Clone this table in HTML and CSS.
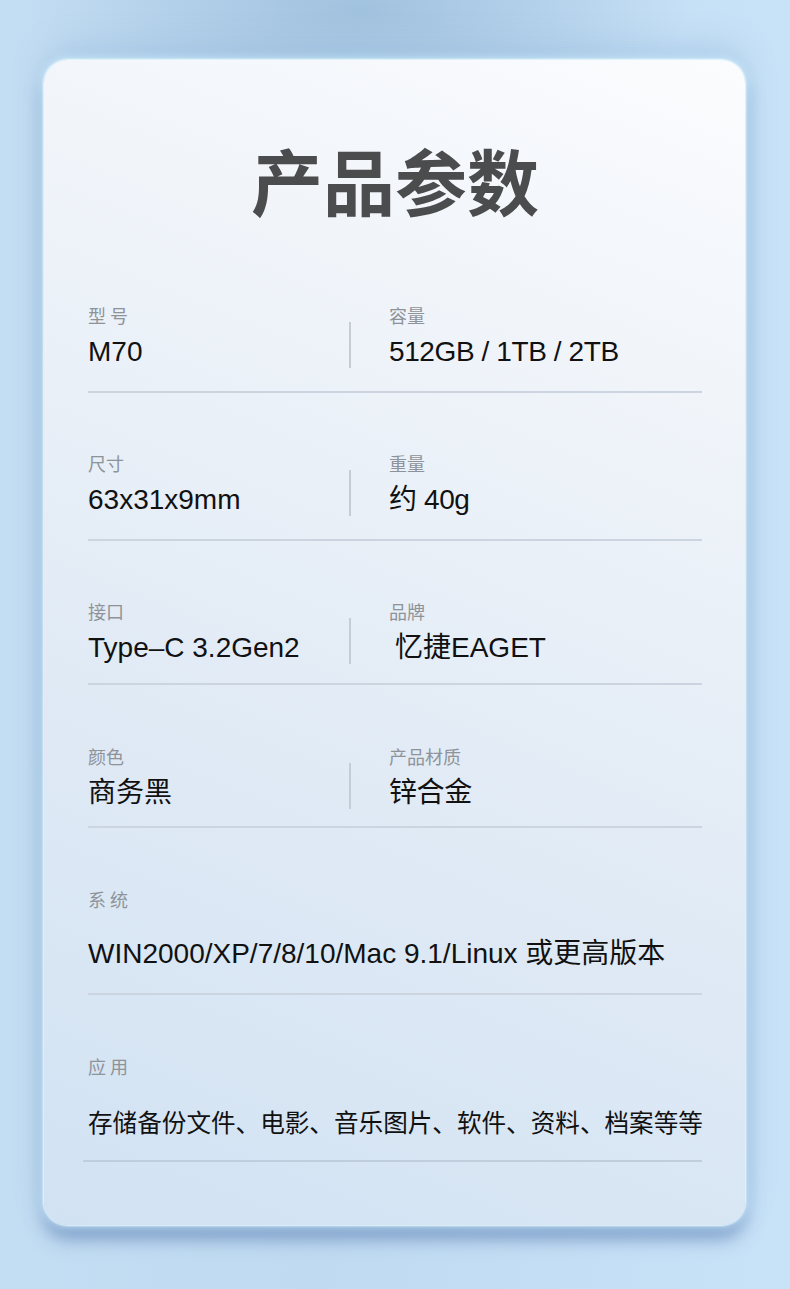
FILE: index.html
```html
<!DOCTYPE html>
<html lang="zh-CN">
<head>
<meta charset="utf-8">
<title>产品参数</title>
<link rel="stylesheet" href="styles.css">
</head>
<body>
<div class="page">
  <section class="card">
    <h1 class="title">产品参数</h1>

    <div class="row pair r1">
      <div class="cell">
        <div class="label">型 号</div>
        <div class="value">M70</div>
      </div>
      <div class="vline"></div>
      <div class="cell right">
        <div class="label">容量</div>
        <div class="value">512GB / 1TB / 2TB</div>
      </div>
    </div>

    <div class="row pair r2">
      <div class="cell">
        <div class="label">尺寸</div>
        <div class="value">63x31x9mm</div>
      </div>
      <div class="vline"></div>
      <div class="cell right">
        <div class="label">重量</div>
        <div class="value">约 40g</div>
      </div>
    </div>

    <div class="row pair r3">
      <div class="cell">
        <div class="label">接口</div>
        <div class="value">Type–C 3.2Gen2</div>
      </div>
      <div class="vline"></div>
      <div class="cell right">
        <div class="label">品牌</div>
        <div class="value indent">忆捷EAGET</div>
      </div>
    </div>

    <div class="row pair r4">
      <div class="cell">
        <div class="label">颜色</div>
        <div class="value">商务黑</div>
      </div>
      <div class="vline"></div>
      <div class="cell right">
        <div class="label">产品材质</div>
        <div class="value">锌合金</div>
      </div>
    </div>

    <div class="row wide">
      <div class="label">系 统</div>
      <div class="value">WIN2000/XP/7/8/10/Mac 9.1/Linux 或更高版本</div>
    </div>

    <div class="row wide last">
      <div class="label">应 用</div>
      <div class="value small">存储备份文件、电影、音乐图片、软件、资料、档案等等</div>
    </div>
  </section>
</div>
</body>
</html>
```

FILE: styles.css
```css
html, body {
  margin: 0;
  padding: 0;
}

body {
  width: 790px;
  height: 1289px;
  overflow: hidden;
  background:
    radial-gradient(ellipse 330px 110px at 360px 10px, rgba(150, 185, 216, 0.75), rgba(150, 185, 216, 0) 100%),
    linear-gradient(90deg, #c3ddf3 0%, #c0daf1 40%, #c8e2f8 100%);
  font-family: "Liberation Sans", "Noto Sans CJK SC", sans-serif;
}

.page {
  padding: 60px 45px 0 44px;
}

.card {
  box-sizing: border-box;
  width: 701px;
  border-radius: 24px;
  padding: 79px 43px 63px 44px;
  background: linear-gradient(202deg, #fbfcfe 0%, #eef3f9 30%, #e0eaf5 62%, #d1e2f3 100%);
  box-shadow:
    0 0 2px 1px rgba(240, 252, 255, 0.95),
    0 0 8px 3px rgba(205, 238, 255, 0.7),
    0 14px 18px rgba(70, 108, 165, 0.55),
    0 -14px 30px rgba(130, 168, 205, 0.35);
}

.title {
  margin: 0 0 25px;
  height: 80px;
  line-height: 80px;
  text-align: center;
  font-family: "Noto Sans CJK SC", sans-serif;
  font-weight: 700;
  font-size: 72px;
  color: #4b4c4e;
}

.row {
  border-bottom: 2px solid #cbd4df;
  padding-top: 59px;
  padding-bottom: 19px;
}

.r1 { padding-bottom: 21px; }
.r2 { padding-top: 58px; padding-bottom: 21px; }
.r3 { padding-top: 58px; padding-bottom: 17px; }
.r4 { padding-top: 59px; padding-bottom: 15px; }

.pair {
  display: grid;
  grid-template-columns: 261px 2px 1fr;
}

.cell.right {
  padding-left: 38px;
}

.vline {
  align-self: end;
  height: 46px;
  margin-bottom: 2px;
  background: #c5ccd5;
}

.label {
  height: 24px;
  line-height: 24px;
  font-family: "Noto Sans CJK SC", sans-serif;
  font-size: 18px;
  color: #8e9399;
}

.value {
  margin-top: 7px;
  height: 36px;
  line-height: 36px;
  font-size: 28px;
  color: #111111;
  white-space: nowrap;
}

.right .value {
  letter-spacing: -0.4px;
}

.value.indent {
  padding-left: 6px;
  letter-spacing: 0;
}

.wide {
  padding-bottom: 21px;
}

.wide .value {
  margin-top: 25px;
}

.value.small {
  font-family: "Noto Sans CJK SC", sans-serif;
  font-size: 24.6px;
}

.last {
  margin-left: -5px;
  padding-left: 5px;
  border-bottom-color: #bfcddc;
}
```
